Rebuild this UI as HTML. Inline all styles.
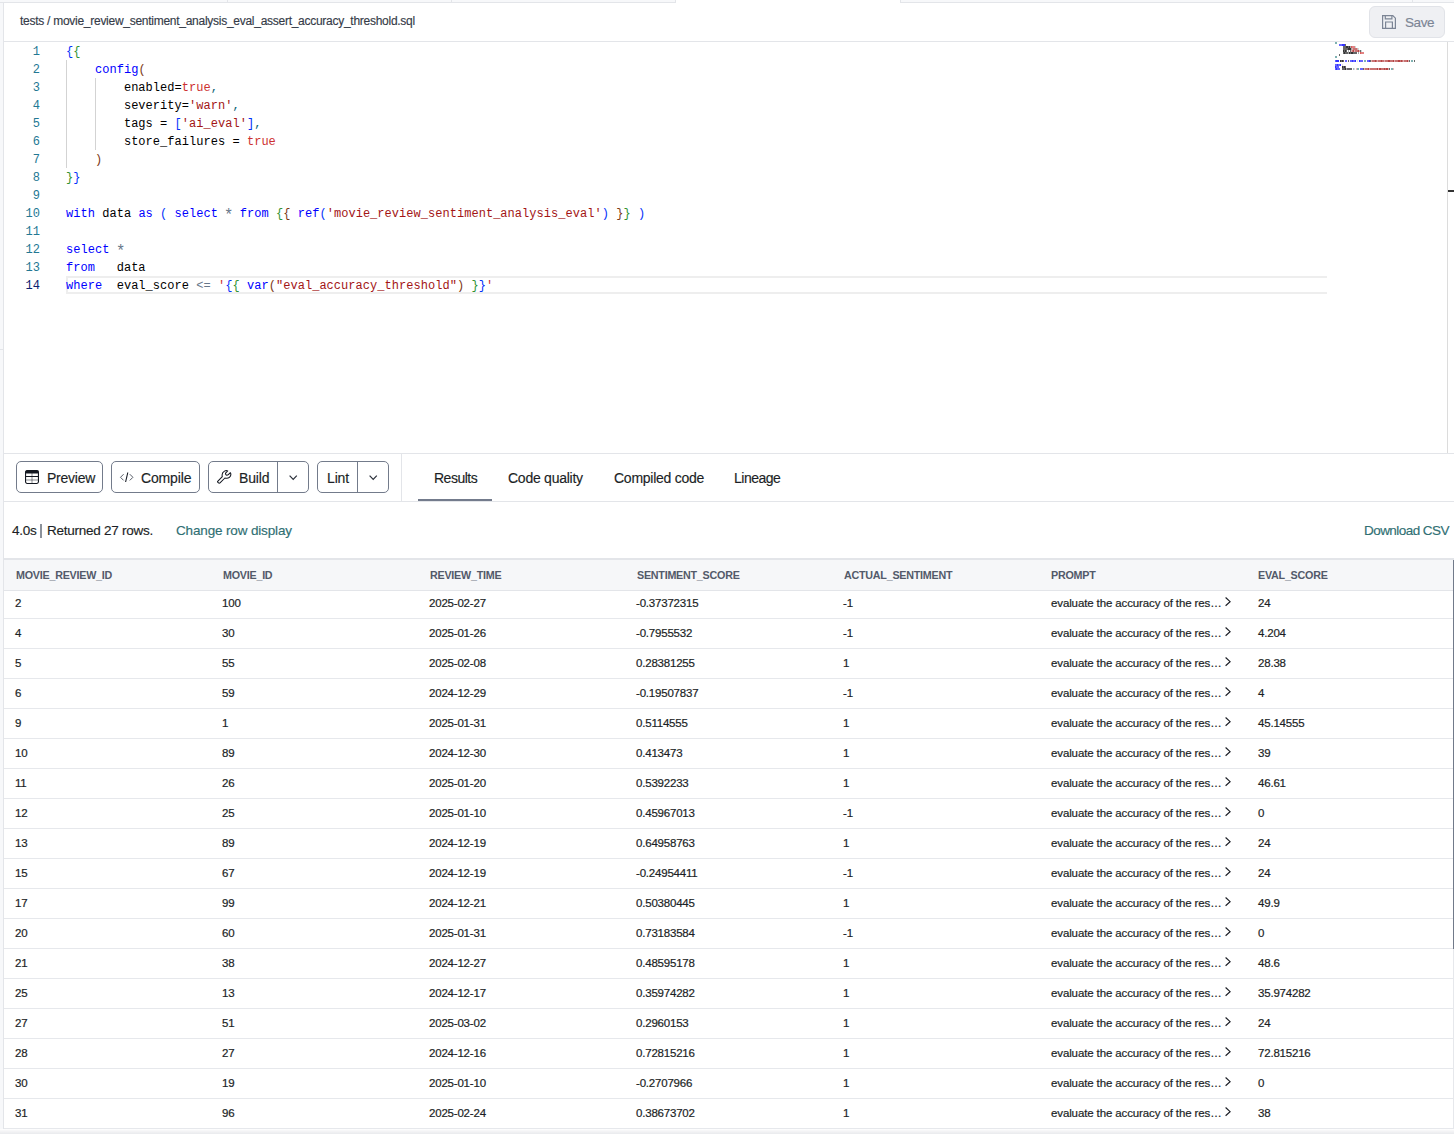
<!DOCTYPE html>
<html><head><meta charset="utf-8">
<style>
*{box-sizing:border-box;margin:0;padding:0}
html,body{width:1454px;height:1134px;overflow:hidden;background:#fff;font-family:"Liberation Sans",sans-serif;color:#1c1f26}
.abs{position:absolute}
#topstrip{position:absolute;left:0;top:0;width:1454px;height:3px;background:#f7f8fa;border-bottom:1px solid #e3e5e9}
.tsep{position:absolute;top:0;width:1px;height:3px;background:#e3e5e9}
#acttab{position:absolute;left:675px;top:0;width:226px;height:3px;background:#fff;border-left:1px solid #e3e5e9;border-right:1px solid #e3e5e9}
#leftstrip{position:absolute;left:0;top:0;width:4px;height:1134px;background:#f7f8fa;border-right:1px solid #e3e5e9}
#path{position:absolute;left:20px;top:14px;font-size:12px;letter-spacing:-0.27px;color:#353b48;white-space:nowrap;-webkit-text-stroke:0.15px currentColor}
#save{position:absolute;left:1369px;top:6px;width:76px;height:32px;background:#eff0f3;border:1px solid #e1e3e8;border-radius:6px}
#save span{position:absolute;left:35px;top:8px;font-size:13.5px;letter-spacing:-0.4px;color:#7c8595;-webkit-text-stroke:0.15px currentColor}
#save svg{position:absolute;left:12px;top:8px}
.hl{position:absolute;left:4px;width:1450px;height:1px;background:#e3e5e9}
#editor{position:absolute;left:4px;top:42px;width:1450px;height:411px;background:#fff}
.ln{position:absolute;left:0;margin-top:1px;width:36px;text-align:right;font-family:"Liberation Mono",monospace;font-size:12px;line-height:18px;color:#237893}
.ln.act{color:#0b216f}
.cl{position:absolute;left:62px;margin-top:1px;white-space:pre;font-family:"Liberation Mono",monospace;font-size:12px;letter-spacing:0.035px;line-height:18px;color:#000}
#lines,#code{position:absolute;left:0;top:0}
.k{color:#0000ff}.t{color:#000}.s{color:#a31515}.b1{color:#0431fa}.b2{color:#319331}.b3{color:#7b3814}.tr{color:#cd3131}.d{color:#0b6374}.o{color:#67778a}.ast{display:inline-block;transform:translateY(2.5px) scale(1.3)}
#curline{position:absolute;left:62px;top:234px;width:1261px;height:18px;border:2px solid #eeeeee;border-right:none}
.guide{position:absolute;width:1px;background:#d3d3d3}
.mm{position:absolute;left:1331px;top:0}
#vscroll{position:absolute;left:1443px;top:0;width:1px;height:411px;background:#dcdcdc}
#vtick{position:absolute;left:1444px;top:148px;width:6px;height:2px;background:#333}
/* toolbar */
.btn{position:absolute;top:461px;height:32px;border:1px solid #737b8b;border-radius:5px;background:#fff}
.btn .lbl{position:absolute;top:8px;font-size:14px;letter-spacing:-0.15px;color:#1c1f26;white-space:nowrap;-webkit-text-stroke:0.15px currentColor}
.btn .div{position:absolute;top:0;width:1px;height:30px;background:#737b8b}
#vsep{position:absolute;left:401px;top:454px;width:1px;height:47px;background:#e3e5e9}
.tab{position:absolute;top:470px;font-size:14px;letter-spacing:-0.25px;color:#1c1f26;white-space:nowrap;-webkit-text-stroke:0.15px currentColor}
#tabul{position:absolute;left:418px;top:499px;width:74px;height:2px;background:#737b8c}
#info{position:absolute;left:12px;top:523px;font-size:13.5px;letter-spacing:-0.25px;color:#1c1f26;white-space:nowrap;-webkit-text-stroke:0.15px currentColor}
#info2{position:absolute;left:47px;top:523px;font-size:13.5px;letter-spacing:-0.25px;color:#1c1f26;white-space:nowrap;-webkit-text-stroke:0.15px currentColor}
#infobar{position:absolute;left:40px;top:524px;width:2px;height:14px;background:#8c929b}
#chg{position:absolute;left:176px;top:523px;font-size:13.5px;letter-spacing:-0.15px;color:#2f6f73;white-space:nowrap;-webkit-text-stroke:0.15px currentColor}
#dl{position:absolute;left:1364px;top:523px;font-size:13.5px;letter-spacing:-0.55px;color:#2f6f73;white-space:nowrap;-webkit-text-stroke:0.15px currentColor}
/* table */
#tbltop{position:absolute;left:4px;top:558px;width:1450px;height:2px;background:#e3e5e9}
#thead{position:absolute;left:4px;top:560px;width:1450px;height:31px;background:#f6f7f9;border-bottom:1px solid #e3e5e9}
.th{position:absolute;top:569px;font-size:11.3px;font-weight:bold;letter-spacing:-0.25px;transform:scaleX(0.95);transform-origin:0 0;color:#535a6a;white-space:nowrap}
.td{position:absolute;font-size:11.5px;letter-spacing:-0.2px;-webkit-text-stroke:0.2px currentColor;color:#1c1f26;white-space:nowrap;line-height:14px}
.rb{position:absolute;left:4px;width:1450px;height:1px;background:#e6e8ec}
.chev{position:absolute}
#rscroll{position:absolute;left:1453px;top:560px;width:1px;height:389px;background:#717a8a}
#bottom{position:absolute;left:0;top:1129px;width:1454px;height:5px;background:linear-gradient(#ffffff,#f7f7f8 30%,#e9eaed)}
</style></head>
<body>
<div id="leftstrip"></div>
<div id="topstrip"></div>
<div class="abs" style="left:0;top:349px;width:3px;height:1px;background:#e3e5e9"></div>
<div class="abs" style="left:1448px;top:42px;width:6px;height:1px;background:#ececec"></div>
<div class="tsep" style="left:227px"></div>
<div class="tsep" style="left:451px"></div>
<div class="tsep" style="left:1412px"></div>
<div id="acttab"></div>
<div id="path">tests / movie_review_sentiment_analysis_eval_assert_accuracy_threshold.sql</div>
<div id="save"><svg width="14" height="14" viewBox="0 0 14 14" fill="none" stroke="#7c8595" stroke-width="1.2"><path d="M0.6 0.6h10.2l2.6 2.6v10.2h-12.8z"/><path d="M3.3 0.6v3.3h6.6v-3.3"/><path d="M3.6 13.4v-6.4h6.8v6.4"/></svg><span>Save</span></div>
<div class="hl" style="top:41px"></div>
<div id="editor">
<div id="curline"></div>
<div class="guide" style="left:62px;top:18px;height:108px"></div>
<div class="guide" style="left:91px;top:36px;height:72px"></div>
<div id="lines">
<div class="ln" style="top:0px">1</div>
<div class="ln" style="top:18px">2</div>
<div class="ln" style="top:36px">3</div>
<div class="ln" style="top:54px">4</div>
<div class="ln" style="top:72px">5</div>
<div class="ln" style="top:90px">6</div>
<div class="ln" style="top:108px">7</div>
<div class="ln" style="top:126px">8</div>
<div class="ln" style="top:144px">9</div>
<div class="ln" style="top:162px">10</div>
<div class="ln" style="top:180px">11</div>
<div class="ln" style="top:198px">12</div>
<div class="ln" style="top:216px">13</div>
<div class="ln act" style="top:234px">14</div>
</div>
<div id="code">
<div class="cl" style="top:0px"><span class="b1">{</span><span class="b2">{</span></div>
<div class="cl" style="top:18px"><span class="t">    </span><span class="k">config</span><span class="b3">(</span></div>
<div class="cl" style="top:36px"><span class="t">        enabled=</span><span class="tr">true</span><span class="d">,</span></div>
<div class="cl" style="top:54px"><span class="t">        severity=</span><span class="s">&#x27;warn&#x27;</span><span class="d">,</span></div>
<div class="cl" style="top:72px"><span class="t">        tags = </span><span class="b1">[</span><span class="s">&#x27;ai_eval&#x27;</span><span class="b1">]</span><span class="d">,</span></div>
<div class="cl" style="top:90px"><span class="t">        store_failures = </span><span class="tr">true</span></div>
<div class="cl" style="top:108px"><span class="t">    </span><span class="b3">)</span></div>
<div class="cl" style="top:126px"><span class="b2">}</span><span class="b1">}</span></div>
<div class="cl" style="top:144px"></div>
<div class="cl" style="top:162px"><span class="k">with</span><span class="t"> data </span><span class="k">as</span><span class="t"> </span><span class="b1">(</span><span class="t"> </span><span class="k">select</span><span class="t"> </span><span class="o"><span class="ast">*</span></span><span class="t"> </span><span class="k">from</span><span class="t"> </span><span class="b2">{</span><span class="b3">{</span><span class="t"> </span><span class="k">ref</span><span class="b1">(</span><span class="s">&#x27;movie_review_sentiment_analysis_eval&#x27;</span><span class="b1">)</span><span class="t"> </span><span class="b3">}</span><span class="b2">}</span><span class="t"> </span><span class="b1">)</span></div>
<div class="cl" style="top:180px"></div>
<div class="cl" style="top:198px"><span class="k">select</span><span class="t"> </span><span class="o"><span class="ast">*</span></span></div>
<div class="cl" style="top:216px"><span class="k">from</span><span class="t">   data</span></div>
<div class="cl" style="top:234px"><span class="k">where</span><span class="t">  eval_score </span><span class="o">&lt;=</span><span class="t"> </span><span class="tr">&#x27;</span><span class="b1">{</span><span class="b2">{</span><span class="t"> </span><span class="k">var</span><span class="b3">(</span><span class="s">&quot;eval_accuracy_threshold&quot;</span><span class="b3">)</span><span class="t"> </span><span class="b2">}</span><span class="b1">}</span><span class="tr">&#x27;</span></div>
</div>
<svg class="mm" width="90" height="30" viewBox="0 0 90 30"><rect x="0" y="0" width="1" height="2" fill-opacity="0.8" fill="#5f9f9f"/><rect x="1" y="0" width="1" height="2" fill-opacity="0.8" fill="#5f9f9f"/><rect x="4" y="2" width="1" height="2" fill-opacity="0.6" fill="#0000ff"/><rect x="5" y="2" width="1" height="2" fill-opacity="0.6" fill="#0000ff"/><rect x="6" y="2" width="1" height="2" fill-opacity="0.6" fill="#0000ff"/><rect x="7" y="2" width="1" height="2" fill-opacity="0.8" fill="#0000ff"/><rect x="8" y="2" width="1" height="2" fill-opacity="0.8" fill="#0000ff"/><rect x="9" y="2" width="1" height="2" fill-opacity="0.8" fill="#0000ff"/><rect x="10" y="2" width="1" height="2" fill-opacity="0.8" fill="#444444"/><rect x="8" y="4" width="1" height="2" fill-opacity="0.6" fill="#000000"/><rect x="9" y="4" width="1" height="2" fill-opacity="0.6" fill="#000000"/><rect x="10" y="4" width="1" height="2" fill-opacity="0.6" fill="#000000"/><rect x="11" y="4" width="1" height="2" fill-opacity="0.8" fill="#000000"/><rect x="12" y="4" width="1" height="2" fill-opacity="0.8" fill="#000000"/><rect x="13" y="4" width="1" height="2" fill-opacity="0.6" fill="#000000"/><rect x="14" y="4" width="1" height="2" fill-opacity="0.8" fill="#000000"/><rect x="15" y="4" width="1" height="2" fill-opacity="0.35" fill="#000000"/><rect x="16" y="4" width="1" height="2" fill-opacity="0.8" fill="#cd3131"/><rect x="17" y="4" width="1" height="2" fill-opacity="0.6" fill="#cd3131"/><rect x="18" y="4" width="1" height="2" fill-opacity="0.6" fill="#cd3131"/><rect x="19" y="4" width="1" height="2" fill-opacity="0.6" fill="#cd3131"/><rect x="20" y="4" width="1" height="2" fill-opacity="0.35" fill="#5f9f9f"/><rect x="8" y="6" width="1" height="2" fill-opacity="0.6" fill="#000000"/><rect x="9" y="6" width="1" height="2" fill-opacity="0.6" fill="#000000"/><rect x="10" y="6" width="1" height="2" fill-opacity="0.6" fill="#000000"/><rect x="11" y="6" width="1" height="2" fill-opacity="0.6" fill="#000000"/><rect x="12" y="6" width="1" height="2" fill-opacity="0.6" fill="#000000"/><rect x="13" y="6" width="1" height="2" fill-opacity="0.8" fill="#000000"/><rect x="14" y="6" width="1" height="2" fill-opacity="0.8" fill="#000000"/><rect x="15" y="6" width="1" height="2" fill-opacity="0.8" fill="#000000"/><rect x="16" y="6" width="1" height="2" fill-opacity="0.35" fill="#000000"/><rect x="17" y="6" width="1" height="2" fill-opacity="0.35" fill="#a31515"/><rect x="18" y="6" width="1" height="2" fill-opacity="0.6" fill="#a31515"/><rect x="19" y="6" width="1" height="2" fill-opacity="0.6" fill="#a31515"/><rect x="20" y="6" width="1" height="2" fill-opacity="0.6" fill="#a31515"/><rect x="21" y="6" width="1" height="2" fill-opacity="0.6" fill="#a31515"/><rect x="22" y="6" width="1" height="2" fill-opacity="0.35" fill="#a31515"/><rect x="23" y="6" width="1" height="2" fill-opacity="0.35" fill="#5f9f9f"/><rect x="8" y="8" width="1" height="2" fill-opacity="0.8" fill="#000000"/><rect x="9" y="8" width="1" height="2" fill-opacity="0.6" fill="#000000"/><rect x="10" y="8" width="1" height="2" fill-opacity="0.8" fill="#000000"/><rect x="11" y="8" width="1" height="2" fill-opacity="0.6" fill="#000000"/><rect x="13" y="8" width="1" height="2" fill-opacity="0.35" fill="#000000"/><rect x="15" y="8" width="1" height="2" fill-opacity="0.8" fill="#444444"/><rect x="16" y="8" width="1" height="2" fill-opacity="0.35" fill="#a31515"/><rect x="17" y="8" width="1" height="2" fill-opacity="0.6" fill="#a31515"/><rect x="18" y="8" width="1" height="2" fill-opacity="0.8" fill="#a31515"/><rect x="19" y="8" width="1" height="2" fill-opacity="0.35" fill="#a31515"/><rect x="20" y="8" width="1" height="2" fill-opacity="0.6" fill="#a31515"/><rect x="21" y="8" width="1" height="2" fill-opacity="0.6" fill="#a31515"/><rect x="22" y="8" width="1" height="2" fill-opacity="0.6" fill="#a31515"/><rect x="23" y="8" width="1" height="2" fill-opacity="0.8" fill="#a31515"/><rect x="24" y="8" width="1" height="2" fill-opacity="0.35" fill="#a31515"/><rect x="25" y="8" width="1" height="2" fill-opacity="0.8" fill="#444444"/><rect x="26" y="8" width="1" height="2" fill-opacity="0.35" fill="#5f9f9f"/><rect x="8" y="10" width="1" height="2" fill-opacity="0.6" fill="#000000"/><rect x="9" y="10" width="1" height="2" fill-opacity="0.8" fill="#000000"/><rect x="10" y="10" width="1" height="2" fill-opacity="0.6" fill="#000000"/><rect x="11" y="10" width="1" height="2" fill-opacity="0.6" fill="#000000"/><rect x="12" y="10" width="1" height="2" fill-opacity="0.6" fill="#000000"/><rect x="13" y="10" width="1" height="2" fill-opacity="0.35" fill="#000000"/><rect x="14" y="10" width="1" height="2" fill-opacity="0.8" fill="#000000"/><rect x="15" y="10" width="1" height="2" fill-opacity="0.6" fill="#000000"/><rect x="16" y="10" width="1" height="2" fill-opacity="0.8" fill="#000000"/><rect x="17" y="10" width="1" height="2" fill-opacity="0.8" fill="#000000"/><rect x="18" y="10" width="1" height="2" fill-opacity="0.6" fill="#000000"/><rect x="19" y="10" width="1" height="2" fill-opacity="0.6" fill="#000000"/><rect x="20" y="10" width="1" height="2" fill-opacity="0.6" fill="#000000"/><rect x="21" y="10" width="1" height="2" fill-opacity="0.6" fill="#000000"/><rect x="23" y="10" width="1" height="2" fill-opacity="0.35" fill="#000000"/><rect x="25" y="10" width="1" height="2" fill-opacity="0.8" fill="#cd3131"/><rect x="26" y="10" width="1" height="2" fill-opacity="0.6" fill="#cd3131"/><rect x="27" y="10" width="1" height="2" fill-opacity="0.6" fill="#cd3131"/><rect x="28" y="10" width="1" height="2" fill-opacity="0.6" fill="#cd3131"/><rect x="4" y="12" width="1" height="2" fill-opacity="0.8" fill="#444444"/><rect x="0" y="14" width="1" height="2" fill-opacity="0.8" fill="#5f9f9f"/><rect x="1" y="14" width="1" height="2" fill-opacity="0.8" fill="#5f9f9f"/><rect x="0" y="18" width="1" height="2" fill-opacity="0.6" fill="#0000ff"/><rect x="1" y="18" width="1" height="2" fill-opacity="0.8" fill="#0000ff"/><rect x="2" y="18" width="1" height="2" fill-opacity="0.8" fill="#0000ff"/><rect x="3" y="18" width="1" height="2" fill-opacity="0.8" fill="#0000ff"/><rect x="5" y="18" width="1" height="2" fill-opacity="0.8" fill="#000000"/><rect x="6" y="18" width="1" height="2" fill-opacity="0.6" fill="#000000"/><rect x="7" y="18" width="1" height="2" fill-opacity="0.8" fill="#000000"/><rect x="8" y="18" width="1" height="2" fill-opacity="0.6" fill="#000000"/><rect x="10" y="18" width="1" height="2" fill-opacity="0.6" fill="#0000ff"/><rect x="11" y="18" width="1" height="2" fill-opacity="0.6" fill="#0000ff"/><rect x="13" y="18" width="1" height="2" fill-opacity="0.8" fill="#444444"/><rect x="15" y="18" width="1" height="2" fill-opacity="0.6" fill="#0000ff"/><rect x="16" y="18" width="1" height="2" fill-opacity="0.6" fill="#0000ff"/><rect x="17" y="18" width="1" height="2" fill-opacity="0.8" fill="#0000ff"/><rect x="18" y="18" width="1" height="2" fill-opacity="0.6" fill="#0000ff"/><rect x="19" y="18" width="1" height="2" fill-opacity="0.6" fill="#0000ff"/><rect x="20" y="18" width="1" height="2" fill-opacity="0.8" fill="#0000ff"/><rect x="22" y="18" width="1" height="2" fill-opacity="0.35" fill="#9aa4b0"/><rect x="24" y="18" width="1" height="2" fill-opacity="0.8" fill="#0000ff"/><rect x="25" y="18" width="1" height="2" fill-opacity="0.6" fill="#0000ff"/><rect x="26" y="18" width="1" height="2" fill-opacity="0.6" fill="#0000ff"/><rect x="27" y="18" width="1" height="2" fill-opacity="0.6" fill="#0000ff"/><rect x="29" y="18" width="1" height="2" fill-opacity="0.8" fill="#5f9f9f"/><rect x="30" y="18" width="1" height="2" fill-opacity="0.8" fill="#5f9f9f"/><rect x="32" y="18" width="1" height="2" fill-opacity="0.6" fill="#0000ff"/><rect x="33" y="18" width="1" height="2" fill-opacity="0.6" fill="#0000ff"/><rect x="34" y="18" width="1" height="2" fill-opacity="0.8" fill="#0000ff"/><rect x="35" y="18" width="1" height="2" fill-opacity="0.8" fill="#444444"/><rect x="36" y="18" width="1" height="2" fill-opacity="0.35" fill="#a31515"/><rect x="37" y="18" width="1" height="2" fill-opacity="0.6" fill="#a31515"/><rect x="38" y="18" width="1" height="2" fill-opacity="0.6" fill="#a31515"/><rect x="39" y="18" width="1" height="2" fill-opacity="0.6" fill="#a31515"/><rect x="40" y="18" width="1" height="2" fill-opacity="0.8" fill="#a31515"/><rect x="41" y="18" width="1" height="2" fill-opacity="0.6" fill="#a31515"/><rect x="42" y="18" width="1" height="2" fill-opacity="0.35" fill="#a31515"/><rect x="43" y="18" width="1" height="2" fill-opacity="0.6" fill="#a31515"/><rect x="44" y="18" width="1" height="2" fill-opacity="0.6" fill="#a31515"/><rect x="45" y="18" width="1" height="2" fill-opacity="0.6" fill="#a31515"/><rect x="46" y="18" width="1" height="2" fill-opacity="0.8" fill="#a31515"/><rect x="47" y="18" width="1" height="2" fill-opacity="0.6" fill="#a31515"/><rect x="48" y="18" width="1" height="2" fill-opacity="0.6" fill="#a31515"/><rect x="49" y="18" width="1" height="2" fill-opacity="0.35" fill="#a31515"/><rect x="50" y="18" width="1" height="2" fill-opacity="0.6" fill="#a31515"/><rect x="51" y="18" width="1" height="2" fill-opacity="0.6" fill="#a31515"/><rect x="52" y="18" width="1" height="2" fill-opacity="0.6" fill="#a31515"/><rect x="53" y="18" width="1" height="2" fill-opacity="0.8" fill="#a31515"/><rect x="54" y="18" width="1" height="2" fill-opacity="0.8" fill="#a31515"/><rect x="55" y="18" width="1" height="2" fill-opacity="0.6" fill="#a31515"/><rect x="56" y="18" width="1" height="2" fill-opacity="0.6" fill="#a31515"/><rect x="57" y="18" width="1" height="2" fill-opacity="0.6" fill="#a31515"/><rect x="58" y="18" width="1" height="2" fill-opacity="0.8" fill="#a31515"/><rect x="59" y="18" width="1" height="2" fill-opacity="0.35" fill="#a31515"/><rect x="60" y="18" width="1" height="2" fill-opacity="0.6" fill="#a31515"/><rect x="61" y="18" width="1" height="2" fill-opacity="0.6" fill="#a31515"/><rect x="62" y="18" width="1" height="2" fill-opacity="0.6" fill="#a31515"/><rect x="63" y="18" width="1" height="2" fill-opacity="0.8" fill="#a31515"/><rect x="64" y="18" width="1" height="2" fill-opacity="0.8" fill="#a31515"/><rect x="65" y="18" width="1" height="2" fill-opacity="0.6" fill="#a31515"/><rect x="66" y="18" width="1" height="2" fill-opacity="0.8" fill="#a31515"/><rect x="67" y="18" width="1" height="2" fill-opacity="0.6" fill="#a31515"/><rect x="68" y="18" width="1" height="2" fill-opacity="0.35" fill="#a31515"/><rect x="69" y="18" width="1" height="2" fill-opacity="0.6" fill="#a31515"/><rect x="70" y="18" width="1" height="2" fill-opacity="0.6" fill="#a31515"/><rect x="71" y="18" width="1" height="2" fill-opacity="0.6" fill="#a31515"/><rect x="72" y="18" width="1" height="2" fill-opacity="0.8" fill="#a31515"/><rect x="73" y="18" width="1" height="2" fill-opacity="0.35" fill="#a31515"/><rect x="74" y="18" width="1" height="2" fill-opacity="0.8" fill="#444444"/><rect x="76" y="18" width="1" height="2" fill-opacity="0.8" fill="#5f9f9f"/><rect x="77" y="18" width="1" height="2" fill-opacity="0.8" fill="#5f9f9f"/><rect x="79" y="18" width="1" height="2" fill-opacity="0.8" fill="#444444"/><rect x="0" y="22" width="1" height="2" fill-opacity="0.6" fill="#0000ff"/><rect x="1" y="22" width="1" height="2" fill-opacity="0.6" fill="#0000ff"/><rect x="2" y="22" width="1" height="2" fill-opacity="0.8" fill="#0000ff"/><rect x="3" y="22" width="1" height="2" fill-opacity="0.6" fill="#0000ff"/><rect x="4" y="22" width="1" height="2" fill-opacity="0.6" fill="#0000ff"/><rect x="5" y="22" width="1" height="2" fill-opacity="0.8" fill="#0000ff"/><rect x="7" y="22" width="1" height="2" fill-opacity="0.35" fill="#9aa4b0"/><rect x="0" y="24" width="1" height="2" fill-opacity="0.8" fill="#0000ff"/><rect x="1" y="24" width="1" height="2" fill-opacity="0.6" fill="#0000ff"/><rect x="2" y="24" width="1" height="2" fill-opacity="0.6" fill="#0000ff"/><rect x="3" y="24" width="1" height="2" fill-opacity="0.6" fill="#0000ff"/><rect x="7" y="24" width="1" height="2" fill-opacity="0.8" fill="#000000"/><rect x="8" y="24" width="1" height="2" fill-opacity="0.6" fill="#000000"/><rect x="9" y="24" width="1" height="2" fill-opacity="0.8" fill="#000000"/><rect x="10" y="24" width="1" height="2" fill-opacity="0.6" fill="#000000"/><rect x="0" y="26" width="1" height="2" fill-opacity="0.6" fill="#0000ff"/><rect x="1" y="26" width="1" height="2" fill-opacity="0.8" fill="#0000ff"/><rect x="2" y="26" width="1" height="2" fill-opacity="0.6" fill="#0000ff"/><rect x="3" y="26" width="1" height="2" fill-opacity="0.6" fill="#0000ff"/><rect x="4" y="26" width="1" height="2" fill-opacity="0.6" fill="#0000ff"/><rect x="7" y="26" width="1" height="2" fill-opacity="0.6" fill="#000000"/><rect x="8" y="26" width="1" height="2" fill-opacity="0.6" fill="#000000"/><rect x="9" y="26" width="1" height="2" fill-opacity="0.6" fill="#000000"/><rect x="10" y="26" width="1" height="2" fill-opacity="0.8" fill="#000000"/><rect x="11" y="26" width="1" height="2" fill-opacity="0.35" fill="#000000"/><rect x="12" y="26" width="1" height="2" fill-opacity="0.6" fill="#000000"/><rect x="13" y="26" width="1" height="2" fill-opacity="0.6" fill="#000000"/><rect x="14" y="26" width="1" height="2" fill-opacity="0.6" fill="#000000"/><rect x="15" y="26" width="1" height="2" fill-opacity="0.6" fill="#000000"/><rect x="16" y="26" width="1" height="2" fill-opacity="0.6" fill="#000000"/><rect x="18" y="26" width="1" height="2" fill-opacity="0.8" fill="#9aa4b0"/><rect x="19" y="26" width="1" height="2" fill-opacity="0.35" fill="#9aa4b0"/><rect x="21" y="26" width="1" height="2" fill-opacity="0.35" fill="#cd3131"/><rect x="22" y="26" width="1" height="2" fill-opacity="0.8" fill="#5f9f9f"/><rect x="23" y="26" width="1" height="2" fill-opacity="0.8" fill="#5f9f9f"/><rect x="25" y="26" width="1" height="2" fill-opacity="0.6" fill="#0000ff"/><rect x="26" y="26" width="1" height="2" fill-opacity="0.6" fill="#0000ff"/><rect x="27" y="26" width="1" height="2" fill-opacity="0.6" fill="#0000ff"/><rect x="28" y="26" width="1" height="2" fill-opacity="0.8" fill="#444444"/><rect x="29" y="26" width="1" height="2" fill-opacity="0.35" fill="#a31515"/><rect x="30" y="26" width="1" height="2" fill-opacity="0.6" fill="#a31515"/><rect x="31" y="26" width="1" height="2" fill-opacity="0.6" fill="#a31515"/><rect x="32" y="26" width="1" height="2" fill-opacity="0.6" fill="#a31515"/><rect x="33" y="26" width="1" height="2" fill-opacity="0.8" fill="#a31515"/><rect x="34" y="26" width="1" height="2" fill-opacity="0.35" fill="#a31515"/><rect x="35" y="26" width="1" height="2" fill-opacity="0.6" fill="#a31515"/><rect x="36" y="26" width="1" height="2" fill-opacity="0.6" fill="#a31515"/><rect x="37" y="26" width="1" height="2" fill-opacity="0.6" fill="#a31515"/><rect x="38" y="26" width="1" height="2" fill-opacity="0.6" fill="#a31515"/><rect x="39" y="26" width="1" height="2" fill-opacity="0.6" fill="#a31515"/><rect x="40" y="26" width="1" height="2" fill-opacity="0.6" fill="#a31515"/><rect x="41" y="26" width="1" height="2" fill-opacity="0.6" fill="#a31515"/><rect x="42" y="26" width="1" height="2" fill-opacity="0.8" fill="#a31515"/><rect x="43" y="26" width="1" height="2" fill-opacity="0.35" fill="#a31515"/><rect x="44" y="26" width="1" height="2" fill-opacity="0.8" fill="#a31515"/><rect x="45" y="26" width="1" height="2" fill-opacity="0.8" fill="#a31515"/><rect x="46" y="26" width="1" height="2" fill-opacity="0.6" fill="#a31515"/><rect x="47" y="26" width="1" height="2" fill-opacity="0.6" fill="#a31515"/><rect x="48" y="26" width="1" height="2" fill-opacity="0.6" fill="#a31515"/><rect x="49" y="26" width="1" height="2" fill-opacity="0.8" fill="#a31515"/><rect x="50" y="26" width="1" height="2" fill-opacity="0.6" fill="#a31515"/><rect x="51" y="26" width="1" height="2" fill-opacity="0.8" fill="#a31515"/><rect x="52" y="26" width="1" height="2" fill-opacity="0.8" fill="#a31515"/><rect x="53" y="26" width="1" height="2" fill-opacity="0.35" fill="#a31515"/><rect x="54" y="26" width="1" height="2" fill-opacity="0.8" fill="#444444"/><rect x="56" y="26" width="1" height="2" fill-opacity="0.8" fill="#5f9f9f"/><rect x="57" y="26" width="1" height="2" fill-opacity="0.8" fill="#5f9f9f"/><rect x="58" y="26" width="1" height="2" fill-opacity="0.35" fill="#cd3131"/></svg>
<div id="vscroll"></div>
<div id="vtick"></div>
</div>
<div class="hl" style="top:453px"></div>
<!-- toolbar -->
<div class="btn" style="left:16px;width:87px"><svg class="abs" style="left:8px;top:8px" width="14" height="14" viewBox="0 0 14 14"><rect x="0.55" y="0.55" width="12.9" height="12.9" rx="1.6" fill="none" stroke="#141821" stroke-width="1.1"/><rect x="0.5" y="0.5" width="13" height="3" rx="1" fill="#141821"/><path d="M0.5 6.5h13" stroke="#141821" stroke-width="1"/><path d="M0.5 10h13M7 3v10.5" stroke="#141821" stroke-opacity="0.55" stroke-width="0.9"/></svg><span class="lbl" style="left:30px;letter-spacing:-0.25px">Preview</span></div>
<div class="btn" style="left:111px;width:89px"><svg class="abs" style="left:7px;top:10px" width="16" height="11" viewBox="0 0 16 11" fill="none" stroke-width="1"><path d="M4.6 2.2L1.5 5.3l3.1 3.1M10.8 2.2l3.1 3.1-3.1 3.1" stroke="#555b66"/><path d="M8.8 0.5L6.6 10" stroke="#141821" stroke-width="1.1"/></svg><span class="lbl" style="left:29px">Compile</span></div>
<div class="btn" style="left:208px;width:101px"><svg class="abs" style="left:8px;top:8px" width="15" height="15" viewBox="0 0 15 15" fill="none" stroke="#141821" stroke-width="1.05" stroke-linejoin="round"><path d="M0.7 11.4L5.3 6.6C4.8 4.6 5.6 2.2 7.5 1.1C8.5 0.5 9.8 0.4 10.7 0.9L8.6 3.1C8.3 4.2 8.9 5.2 10 5.3C10.8 5.4 11.4 5 13.4 2.7C14 4 13.8 6.2 12.4 7.3C11.3 8.2 9.5 8.4 7.9 8L3 12.9C2.6 13.3 1.9 13.3 1.5 12.9L0.7 12.1C0.5 11.9 0.5 11.6 0.7 11.4Z"/></svg><span class="lbl" style="left:30px">Build</span><div class="div" style="left:68px"></div><svg class="abs" style="left:80px;top:13px" width="9" height="6" viewBox="0 0 9 6" fill="none" stroke="#2a2f3a" stroke-width="1.2"><path d="M0.6 0.7L4.2 4.4L7.8 0.7"/></svg></div>
<div class="btn" style="left:317px;width:72px"><span class="lbl" style="left:9px">Lint</span><div class="div" style="left:39px"></div><svg class="abs" style="left:51px;top:13px" width="9" height="6" viewBox="0 0 9 6" fill="none" stroke="#2a2f3a" stroke-width="1.2"><path d="M0.6 0.7L4.2 4.4L7.8 0.7"/></svg></div>
<div id="vsep"></div>
<div class="tab" style="left:434px;letter-spacing:-0.5px">Results</div>
<div class="tab" style="left:508px">Code quality</div>
<div class="tab" style="left:614px">Compiled code</div>
<div class="tab" style="left:734px;letter-spacing:-0.5px">Lineage</div>
<div id="tabul"></div>
<div class="hl" style="top:501px"></div>
<div id="info">4.0s</div><div id="infobar"></div><div id="info2">Returned 27 rows.</div>
<div id="chg">Change row display</div>
<div id="dl">Download CSV</div>
<div id="tbltop"></div>
<div id="thead"></div>
<div class="th" style="left:16px">MOVIE_REVIEW_ID</div>
<div class="th" style="left:223px">MOVIE_ID</div>
<div class="th" style="left:430px">REVIEW_TIME</div>
<div class="th" style="left:637px">SENTIMENT_SCORE</div>
<div class="th" style="left:844px">ACTUAL_SENTIMENT</div>
<div class="th" style="left:1051px">PROMPT</div>
<div class="th" style="left:1258px">EVAL_SCORE</div>
<div class="td" style="left:15px;top:596px">2</div>
<div class="td" style="left:222px;top:596px">100</div>
<div class="td" style="left:429px;top:596px">2025-02-27</div>
<div class="td" style="left:636px;top:596px">-0.37372315</div>
<div class="td" style="left:843px;top:596px">-1</div>
<div class="td pr" style="left:1051px;top:596px;letter-spacing:-0.12px">evaluate the accuracy of the res…</div><svg class="chev" style="left:1225px;top:597px" width="6" height="10" viewBox="0 0 6 10"><path d="M0.6 0.5L5.1 4.7L0.6 8.8" fill="none" stroke="#1c1f26" stroke-width="1.15"/></svg>
<div class="td" style="left:1258px;top:596px">24</div>
<div class="rb" style="top:618px"></div>
<div class="td" style="left:15px;top:626px">4</div>
<div class="td" style="left:222px;top:626px">30</div>
<div class="td" style="left:429px;top:626px">2025-01-26</div>
<div class="td" style="left:636px;top:626px">-0.7955532</div>
<div class="td" style="left:843px;top:626px">-1</div>
<div class="td pr" style="left:1051px;top:626px;letter-spacing:-0.12px">evaluate the accuracy of the res…</div><svg class="chev" style="left:1225px;top:627px" width="6" height="10" viewBox="0 0 6 10"><path d="M0.6 0.5L5.1 4.7L0.6 8.8" fill="none" stroke="#1c1f26" stroke-width="1.15"/></svg>
<div class="td" style="left:1258px;top:626px">4.204</div>
<div class="rb" style="top:648px"></div>
<div class="td" style="left:15px;top:656px">5</div>
<div class="td" style="left:222px;top:656px">55</div>
<div class="td" style="left:429px;top:656px">2025-02-08</div>
<div class="td" style="left:636px;top:656px">0.28381255</div>
<div class="td" style="left:843px;top:656px">1</div>
<div class="td pr" style="left:1051px;top:656px;letter-spacing:-0.12px">evaluate the accuracy of the res…</div><svg class="chev" style="left:1225px;top:657px" width="6" height="10" viewBox="0 0 6 10"><path d="M0.6 0.5L5.1 4.7L0.6 8.8" fill="none" stroke="#1c1f26" stroke-width="1.15"/></svg>
<div class="td" style="left:1258px;top:656px">28.38</div>
<div class="rb" style="top:678px"></div>
<div class="td" style="left:15px;top:686px">6</div>
<div class="td" style="left:222px;top:686px">59</div>
<div class="td" style="left:429px;top:686px">2024-12-29</div>
<div class="td" style="left:636px;top:686px">-0.19507837</div>
<div class="td" style="left:843px;top:686px">-1</div>
<div class="td pr" style="left:1051px;top:686px;letter-spacing:-0.12px">evaluate the accuracy of the res…</div><svg class="chev" style="left:1225px;top:687px" width="6" height="10" viewBox="0 0 6 10"><path d="M0.6 0.5L5.1 4.7L0.6 8.8" fill="none" stroke="#1c1f26" stroke-width="1.15"/></svg>
<div class="td" style="left:1258px;top:686px">4</div>
<div class="rb" style="top:708px"></div>
<div class="td" style="left:15px;top:716px">9</div>
<div class="td" style="left:222px;top:716px">1</div>
<div class="td" style="left:429px;top:716px">2025-01-31</div>
<div class="td" style="left:636px;top:716px">0.5114555</div>
<div class="td" style="left:843px;top:716px">1</div>
<div class="td pr" style="left:1051px;top:716px;letter-spacing:-0.12px">evaluate the accuracy of the res…</div><svg class="chev" style="left:1225px;top:717px" width="6" height="10" viewBox="0 0 6 10"><path d="M0.6 0.5L5.1 4.7L0.6 8.8" fill="none" stroke="#1c1f26" stroke-width="1.15"/></svg>
<div class="td" style="left:1258px;top:716px">45.14555</div>
<div class="rb" style="top:738px"></div>
<div class="td" style="left:15px;top:746px">10</div>
<div class="td" style="left:222px;top:746px">89</div>
<div class="td" style="left:429px;top:746px">2024-12-30</div>
<div class="td" style="left:636px;top:746px">0.413473</div>
<div class="td" style="left:843px;top:746px">1</div>
<div class="td pr" style="left:1051px;top:746px;letter-spacing:-0.12px">evaluate the accuracy of the res…</div><svg class="chev" style="left:1225px;top:747px" width="6" height="10" viewBox="0 0 6 10"><path d="M0.6 0.5L5.1 4.7L0.6 8.8" fill="none" stroke="#1c1f26" stroke-width="1.15"/></svg>
<div class="td" style="left:1258px;top:746px">39</div>
<div class="rb" style="top:768px"></div>
<div class="td" style="left:15px;top:776px">11</div>
<div class="td" style="left:222px;top:776px">26</div>
<div class="td" style="left:429px;top:776px">2025-01-20</div>
<div class="td" style="left:636px;top:776px">0.5392233</div>
<div class="td" style="left:843px;top:776px">1</div>
<div class="td pr" style="left:1051px;top:776px;letter-spacing:-0.12px">evaluate the accuracy of the res…</div><svg class="chev" style="left:1225px;top:777px" width="6" height="10" viewBox="0 0 6 10"><path d="M0.6 0.5L5.1 4.7L0.6 8.8" fill="none" stroke="#1c1f26" stroke-width="1.15"/></svg>
<div class="td" style="left:1258px;top:776px">46.61</div>
<div class="rb" style="top:798px"></div>
<div class="td" style="left:15px;top:806px">12</div>
<div class="td" style="left:222px;top:806px">25</div>
<div class="td" style="left:429px;top:806px">2025-01-10</div>
<div class="td" style="left:636px;top:806px">0.45967013</div>
<div class="td" style="left:843px;top:806px">-1</div>
<div class="td pr" style="left:1051px;top:806px;letter-spacing:-0.12px">evaluate the accuracy of the res…</div><svg class="chev" style="left:1225px;top:807px" width="6" height="10" viewBox="0 0 6 10"><path d="M0.6 0.5L5.1 4.7L0.6 8.8" fill="none" stroke="#1c1f26" stroke-width="1.15"/></svg>
<div class="td" style="left:1258px;top:806px">0</div>
<div class="rb" style="top:828px"></div>
<div class="td" style="left:15px;top:836px">13</div>
<div class="td" style="left:222px;top:836px">89</div>
<div class="td" style="left:429px;top:836px">2024-12-19</div>
<div class="td" style="left:636px;top:836px">0.64958763</div>
<div class="td" style="left:843px;top:836px">1</div>
<div class="td pr" style="left:1051px;top:836px;letter-spacing:-0.12px">evaluate the accuracy of the res…</div><svg class="chev" style="left:1225px;top:837px" width="6" height="10" viewBox="0 0 6 10"><path d="M0.6 0.5L5.1 4.7L0.6 8.8" fill="none" stroke="#1c1f26" stroke-width="1.15"/></svg>
<div class="td" style="left:1258px;top:836px">24</div>
<div class="rb" style="top:858px"></div>
<div class="td" style="left:15px;top:866px">15</div>
<div class="td" style="left:222px;top:866px">67</div>
<div class="td" style="left:429px;top:866px">2024-12-19</div>
<div class="td" style="left:636px;top:866px">-0.24954411</div>
<div class="td" style="left:843px;top:866px">-1</div>
<div class="td pr" style="left:1051px;top:866px;letter-spacing:-0.12px">evaluate the accuracy of the res…</div><svg class="chev" style="left:1225px;top:867px" width="6" height="10" viewBox="0 0 6 10"><path d="M0.6 0.5L5.1 4.7L0.6 8.8" fill="none" stroke="#1c1f26" stroke-width="1.15"/></svg>
<div class="td" style="left:1258px;top:866px">24</div>
<div class="rb" style="top:888px"></div>
<div class="td" style="left:15px;top:896px">17</div>
<div class="td" style="left:222px;top:896px">99</div>
<div class="td" style="left:429px;top:896px">2024-12-21</div>
<div class="td" style="left:636px;top:896px">0.50380445</div>
<div class="td" style="left:843px;top:896px">1</div>
<div class="td pr" style="left:1051px;top:896px;letter-spacing:-0.12px">evaluate the accuracy of the res…</div><svg class="chev" style="left:1225px;top:897px" width="6" height="10" viewBox="0 0 6 10"><path d="M0.6 0.5L5.1 4.7L0.6 8.8" fill="none" stroke="#1c1f26" stroke-width="1.15"/></svg>
<div class="td" style="left:1258px;top:896px">49.9</div>
<div class="rb" style="top:918px"></div>
<div class="td" style="left:15px;top:926px">20</div>
<div class="td" style="left:222px;top:926px">60</div>
<div class="td" style="left:429px;top:926px">2025-01-31</div>
<div class="td" style="left:636px;top:926px">0.73183584</div>
<div class="td" style="left:843px;top:926px">-1</div>
<div class="td pr" style="left:1051px;top:926px;letter-spacing:-0.12px">evaluate the accuracy of the res…</div><svg class="chev" style="left:1225px;top:927px" width="6" height="10" viewBox="0 0 6 10"><path d="M0.6 0.5L5.1 4.7L0.6 8.8" fill="none" stroke="#1c1f26" stroke-width="1.15"/></svg>
<div class="td" style="left:1258px;top:926px">0</div>
<div class="rb" style="top:948px"></div>
<div class="td" style="left:15px;top:956px">21</div>
<div class="td" style="left:222px;top:956px">38</div>
<div class="td" style="left:429px;top:956px">2024-12-27</div>
<div class="td" style="left:636px;top:956px">0.48595178</div>
<div class="td" style="left:843px;top:956px">1</div>
<div class="td pr" style="left:1051px;top:956px;letter-spacing:-0.12px">evaluate the accuracy of the res…</div><svg class="chev" style="left:1225px;top:957px" width="6" height="10" viewBox="0 0 6 10"><path d="M0.6 0.5L5.1 4.7L0.6 8.8" fill="none" stroke="#1c1f26" stroke-width="1.15"/></svg>
<div class="td" style="left:1258px;top:956px">48.6</div>
<div class="rb" style="top:978px"></div>
<div class="td" style="left:15px;top:986px">25</div>
<div class="td" style="left:222px;top:986px">13</div>
<div class="td" style="left:429px;top:986px">2024-12-17</div>
<div class="td" style="left:636px;top:986px">0.35974282</div>
<div class="td" style="left:843px;top:986px">1</div>
<div class="td pr" style="left:1051px;top:986px;letter-spacing:-0.12px">evaluate the accuracy of the res…</div><svg class="chev" style="left:1225px;top:987px" width="6" height="10" viewBox="0 0 6 10"><path d="M0.6 0.5L5.1 4.7L0.6 8.8" fill="none" stroke="#1c1f26" stroke-width="1.15"/></svg>
<div class="td" style="left:1258px;top:986px">35.974282</div>
<div class="rb" style="top:1008px"></div>
<div class="td" style="left:15px;top:1016px">27</div>
<div class="td" style="left:222px;top:1016px">51</div>
<div class="td" style="left:429px;top:1016px">2025-03-02</div>
<div class="td" style="left:636px;top:1016px">0.2960153</div>
<div class="td" style="left:843px;top:1016px">1</div>
<div class="td pr" style="left:1051px;top:1016px;letter-spacing:-0.12px">evaluate the accuracy of the res…</div><svg class="chev" style="left:1225px;top:1017px" width="6" height="10" viewBox="0 0 6 10"><path d="M0.6 0.5L5.1 4.7L0.6 8.8" fill="none" stroke="#1c1f26" stroke-width="1.15"/></svg>
<div class="td" style="left:1258px;top:1016px">24</div>
<div class="rb" style="top:1038px"></div>
<div class="td" style="left:15px;top:1046px">28</div>
<div class="td" style="left:222px;top:1046px">27</div>
<div class="td" style="left:429px;top:1046px">2024-12-16</div>
<div class="td" style="left:636px;top:1046px">0.72815216</div>
<div class="td" style="left:843px;top:1046px">1</div>
<div class="td pr" style="left:1051px;top:1046px;letter-spacing:-0.12px">evaluate the accuracy of the res…</div><svg class="chev" style="left:1225px;top:1047px" width="6" height="10" viewBox="0 0 6 10"><path d="M0.6 0.5L5.1 4.7L0.6 8.8" fill="none" stroke="#1c1f26" stroke-width="1.15"/></svg>
<div class="td" style="left:1258px;top:1046px">72.815216</div>
<div class="rb" style="top:1068px"></div>
<div class="td" style="left:15px;top:1076px">30</div>
<div class="td" style="left:222px;top:1076px">19</div>
<div class="td" style="left:429px;top:1076px">2025-01-10</div>
<div class="td" style="left:636px;top:1076px">-0.2707966</div>
<div class="td" style="left:843px;top:1076px">1</div>
<div class="td pr" style="left:1051px;top:1076px;letter-spacing:-0.12px">evaluate the accuracy of the res…</div><svg class="chev" style="left:1225px;top:1077px" width="6" height="10" viewBox="0 0 6 10"><path d="M0.6 0.5L5.1 4.7L0.6 8.8" fill="none" stroke="#1c1f26" stroke-width="1.15"/></svg>
<div class="td" style="left:1258px;top:1076px">0</div>
<div class="rb" style="top:1098px"></div>
<div class="td" style="left:15px;top:1106px">31</div>
<div class="td" style="left:222px;top:1106px">96</div>
<div class="td" style="left:429px;top:1106px">2025-02-24</div>
<div class="td" style="left:636px;top:1106px">0.38673702</div>
<div class="td" style="left:843px;top:1106px">1</div>
<div class="td pr" style="left:1051px;top:1106px;letter-spacing:-0.12px">evaluate the accuracy of the res…</div><svg class="chev" style="left:1225px;top:1107px" width="6" height="10" viewBox="0 0 6 10"><path d="M0.6 0.5L5.1 4.7L0.6 8.8" fill="none" stroke="#1c1f26" stroke-width="1.15"/></svg>
<div class="td" style="left:1258px;top:1106px">38</div>
<div class="rb" style="top:1128px"></div>
<div id="rscroll"></div>
<div class="abs" style="left:1453px;top:949px;width:1px;height:180px;background:#e6e8ec"></div>
<div id="bottom"></div>
</body></html>
